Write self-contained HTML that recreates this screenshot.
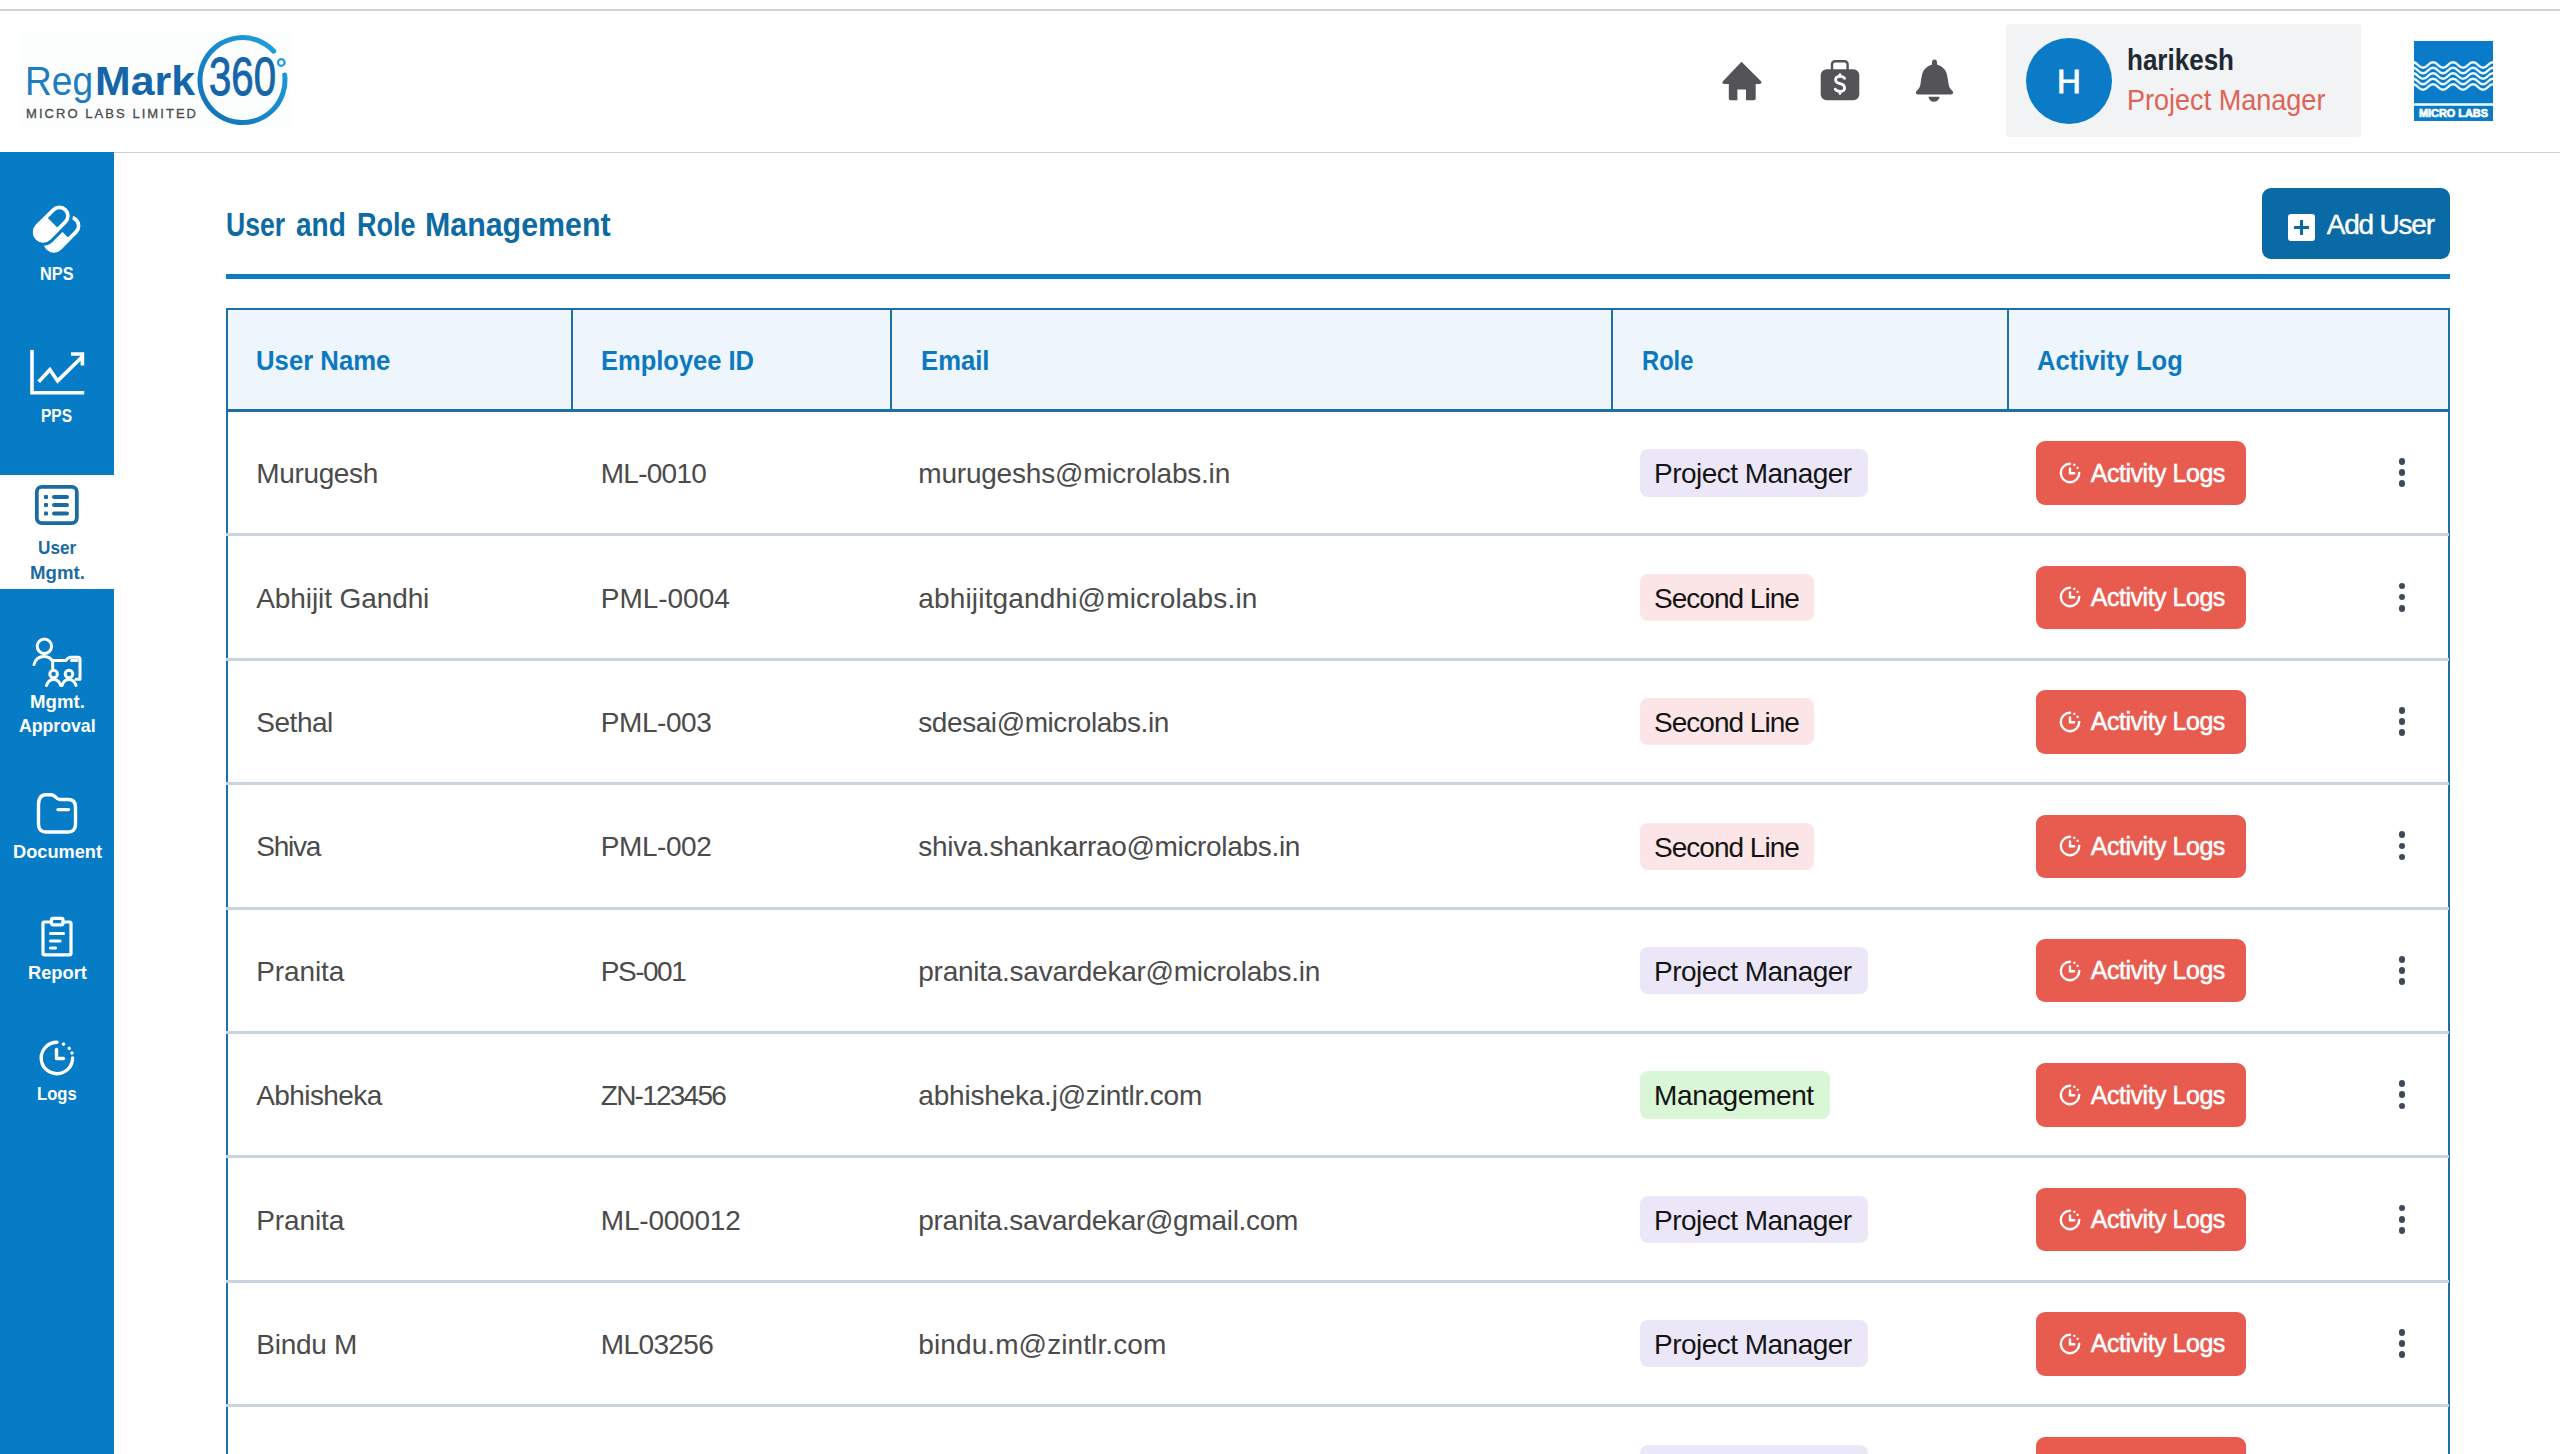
<!DOCTYPE html>
<html><head><meta charset="utf-8">
<style>
*{margin:0;padding:0;box-sizing:border-box}
html,body{width:2560px;height:1454px;overflow:hidden;background:#fff;font-family:"Liberation Sans",sans-serif}
.abs{position:absolute}
.t{white-space:nowrap}
#topline{left:0;top:9px;width:2560px;height:2px;background:#d2d2d2}
#hdrline{left:114px;top:152px;width:2446px;height:1px;background:#bfd5da}
#side{left:0;top:152px;width:114px;height:1302px;background:#067cc6}
.sl{position:absolute;left:0;width:114px;text-align:center;color:#fff;font-weight:bold;font-size:18px;line-height:24px}
#active{left:0;top:475px;width:114px;height:114px;background:#fff}
#title{left:226px;top:203px;font-size:32px;font-weight:bold;color:#0d6aa3;white-space:nowrap}
#tline{left:226px;top:274px;width:2224px;height:5px;background:#0e7cc2}
#addbtn{left:2262px;top:188px;width:188px;height:71px;background:#0a6aa6;border-radius:10px}
#thead{left:226px;top:307px;width:2224px;height:104px;background:#eef5fc;border:2px solid #1a7bc2;border-bottom-width:3px}
.th{position:absolute;top:0;height:100%;font-size:28px;font-weight:bold;color:#0c79bf;line-height:100px}
.vd{position:absolute;top:0;width:2px;height:100%;background:#1a7bc2}
.row{position:absolute;left:226px;width:2224px;height:125px;border-left:2px solid #1a7bc2;border-right:2px solid #1a7bc2}
.sep{position:absolute;left:226px;width:2224px;height:3px;background:#c9d2dc}
.td{position:absolute;top:0;line-height:125px;font-size:27px;color:#454545;white-space:nowrap}
.badge{position:absolute;left:1412px;top:38px;height:48px;border-radius:8px;font-size:27px;line-height:48px;color:#111;padding:0 14px}
.pm{background:#ebe7f8}.sl2{background:#fbe4e5}.mg{background:#dff5dc}
.alog{position:absolute;left:1808px;top:30px;width:210px;height:64px;border-radius:8px;background:#e85c50;color:#fff;font-size:26px;line-height:64px}
.kb{position:absolute;left:2169px;top:46px;width:10px;height:32px}
.kb i{position:absolute;left:1px;width:8px;height:8px;border-radius:50%;background:#3c4650}
</style></head><body>
<div id="hdr">
<div class="abs" style="left:21px;top:31px;width:270px;height:96px;background:#fcfdfd"></div>
<svg class="abs" style="left:0;top:0" width="300" height="140" viewBox="0 0 300 140">
<defs><linearGradient id="rg" x1="0" y1="1" x2="1" y2="0"><stop offset="0" stop-color="#0f6fb8"/><stop offset="1" stop-color="#22a3e0"/></linearGradient></defs>
<text x="25" y="95" font-family="Liberation Sans" font-size="40" fill="#1d7dc0" textLength="68" lengthAdjust="spacingAndGlyphs">Reg</text>
<text x="95" y="95" font-family="Liberation Sans" font-weight="bold" font-size="40" fill="#1466a8" textLength="100" lengthAdjust="spacingAndGlyphs">Mark</text>
<text x="26" y="117.5" font-family="Liberation Sans" font-size="13" fill="#4b4b4b" stroke="#4b4b4b" stroke-width="0.3" textLength="170" lengthAdjust="spacing">MICRO LABS LIMITED</text>
<path d="M 273.7 51.2 A 42.5 42.5 0 1 0 284.7 75" fill="none" stroke="url(#rg)" stroke-width="5" stroke-linecap="round"/>
<circle cx="281.3" cy="62.5" r="3.3" fill="none" stroke="#1e9ad8" stroke-width="2.2"/>
<text x="209" y="95" font-family="Liberation Sans" font-size="54" fill="#1466a8" stroke="#1466a8" stroke-width="1" textLength="67" lengthAdjust="spacingAndGlyphs">360</text>
</svg>
<svg class="abs" style="left:1715px;top:55px" width="250" height="52" viewBox="1715 55 250 52">
<path d="M1741.5 61.7 L1761.3 81.5 Q1762 84 1759 84 L1755.7 84 L1755.7 98.5 Q1755.7 100.3 1754 100.3 L1746 100.3 L1746 89.6 L1737.4 89.6 L1737.4 100.3 L1730.5 100.3 Q1728.8 100.3 1728.8 98.5 L1728.8 84 L1724.5 84 Q1721.5 84 1722.7 81.5 Z" fill="#545458"/>
<rect x="1820.7" y="69.3" width="38.6" height="31" rx="6" fill="#545458"/>
<rect x="1832" y="61.3" width="15.6" height="12" rx="3" fill="none" stroke="#545458" stroke-width="2.4"/>
<g fill="none" stroke="#fff" stroke-width="2.8" stroke-linecap="round"><path d="M1844.6 78.3 Q1843.2 76.4 1840 76.4 Q1835.6 76.4 1835.6 79.8 Q1835.6 82.6 1840 83.6 Q1844.6 84.6 1844.6 88 Q1844.6 91.4 1840 91.4 Q1836.6 91.4 1835.3 89.3"/><path d="M1840 74.6 L1840 76 M1840 91.8 L1840 93.4"/></g>
<path d="M1934.5 59.6 Q1937 59.6 1937 62.5 L1937 64.5 Q1947 67 1948 80 Q1948.5 88 1952 90.5 Q1953.8 92 1953 93.5 Q1952.5 94.4 1950 94.4 L1919 94.4 Q1916.5 94.4 1916 93.5 Q1915.3 92 1917 90.5 Q1920.5 88 1921 80 Q1922 67 1932 64.5 L1932 62.5 Q1932 59.6 1934.5 59.6 Z" fill="#545458"/>
<path d="M1928.4 96.8 L1939.6 96.8 Q1938.5 101.8 1934 101.8 Q1929.5 101.8 1928.4 96.8 Z" fill="#545458"/>
</svg>
<div class="abs" style="left:2006px;top:24px;width:355px;height:113px;background:#f2f3f5;border-radius:4px"></div>
<div class="abs" style="left:2026px;top:38px;width:86px;height:86px;border-radius:50%;background:#0b7bc8"></div><div class="abs" style="left:2026px;top:39.05px;width:86px;font-size:33px;line-height:86px;text-align:center;color:#fff;-webkit-text-stroke:0.9px #fff">H</div>
<div class="abs t" style="left:2127.00px;top:42.09px;font-size:30px;line-height:36px;font-weight:bold;color:#1f2933;transform:scaleX(0.8672);transform-origin:0 0">harikesh</div>
<div class="abs t" style="left:2126.60px;top:81.9px;font-size:29px;line-height:36px;color:#df6356;transform:scaleX(0.9324);transform-origin:0 0">Project Manager</div>
<svg class="abs" style="left:2414px;top:41px" width="79" height="80" viewBox="0 0 79 80">
<rect x="0" y="0" width="79" height="80" fill="#0a7bc8"/>
<g fill="none" stroke="#e8faff" stroke-width="2.6">
<path id="wv" d="M-6 24 q5 -5.5 10 0 t10 0 t10 0 t10 0 t10 0 t10 0 t10 0 t10 0 t10 0 t10 0"/>
<use href="#wv" y="5.5"/><use href="#wv" y="11"/><use href="#wv" y="16.5"/><use href="#wv" y="22"/>
</g>
<rect x="0" y="62.2" width="79" height="2.6" fill="#e8faff"/>
<text x="39.5" y="76" font-family="Liberation Sans" font-weight="bold" font-size="10.5" fill="#fff" stroke="#fff" stroke-width="0.7" text-anchor="middle" textLength="69" lengthAdjust="spacingAndGlyphs">MICRO LABS</text>
</svg>
</div>
<div id="topline" class="abs"></div>
<div id="hdrline" class="abs"></div>

<!--SIDE--><div id="side" class="abs"></div>
<div id="active" class="abs"></div>
<svg class="abs" style="left:0;top:152px" width="114" height="1000" viewBox="0 152 114 1000">
<g id="nps">
 <g transform="rotate(-45 62 234)">
  <rect x="42" y="225.5" width="40" height="17" rx="8.5" fill="none" stroke="#fff" stroke-width="3.6"/>
  <path d="M50.5 225.5 A8.5 8.5 0 0 0 50.5 242.5 L62 242.5 L62 225.5 Z" fill="#fff" stroke="#fff" stroke-width="3.6" stroke-linejoin="round"/>
 </g>
 <g transform="rotate(-45 51.3 224)">
  <rect x="31.3" y="215.5" width="40" height="17" rx="8.5" fill="#067cc6" stroke="#067cc6" stroke-width="10"/>
  <rect x="31.3" y="215.5" width="40" height="17" rx="8.5" fill="#067cc6" stroke="#fff" stroke-width="3.6"/>
  <path d="M39.8 215.5 A8.5 8.5 0 0 0 39.8 232.5 L51.3 232.5 L51.3 215.5 Z" fill="#fff" stroke="#fff" stroke-width="3.6" stroke-linejoin="round"/>
 </g>
</g>
<g fill="none" stroke="#fff" stroke-width="3.6" stroke-linecap="butt">
 <path d="M32 350 L32 392.8 L84.2 392.8"/>
 <path d="M38.7 381.7 L49.9 369.7 L57.6 380.9 L83 356" stroke-linejoin="miter"/>
 <path d="M71 354 L82.4 354 L82.4 365.4"/>
</g>
<g fill="none" stroke="#1b6ba0" stroke-width="3.8">
 <rect x="36.8" y="486.9" width="40" height="36.2" rx="5"/>
</g>
<g fill="#1b6ba0">
 <rect x="44" y="495" width="4" height="4" rx="1"/><rect x="52" y="495" width="17" height="4" rx="2"/>
 <rect x="44" y="503" width="4" height="4" rx="1"/><rect x="52" y="503" width="17" height="4" rx="2"/>
 <rect x="44" y="511.4" width="4" height="4" rx="1"/><rect x="52" y="511.4" width="17" height="4" rx="2"/>
</g>
<g fill="none" stroke="#fff" stroke-width="3" stroke-linecap="round" stroke-linejoin="round">
 <circle cx="44.4" cy="646.3" r="7.2"/>
 <path d="M34 664.5 Q36 656.5 44.3 656.5 Q50.5 656.5 52.7 662 L52.7 668"/>
 <path d="M52.7 660.5 L66 660.5 Q68 657.3 71 657.3 L78 657.3 Q80 657.3 80 659.5 L80 679.3 L76 679.3"/>
 <path d="M71.5 660.6 L77 660.6"/>
 <circle cx="53.6" cy="674" r="3.8"/>
 <circle cx="69" cy="674" r="3.8"/>
 <path d="M46.5 685.5 Q48.5 679.5 53.6 679.5 Q58.7 679.5 60.7 685.5"/>
 <path d="M62 685.5 Q64 679.5 69 679.5 Q74 679.5 76 685.5"/>
</g>
<g fill="none" stroke="#fff" stroke-width="3.4" stroke-linecap="round" stroke-linejoin="round">
 <path d="M38.5 805 Q38.5 794.8 46 794.8 L51 794.8 Q53.5 794.8 55.5 797 Q57.5 799.5 60 799.5 L68 799.5 Q75.5 799.5 75.5 807 L75.5 824 Q75.5 832 68 832 L46 832 Q38.5 832 38.5 824 Z"/>
 <path d="M58 809.6 L68.5 809.6"/>
</g>
<g fill="none" stroke="#fff" stroke-width="3.2" stroke-linecap="round" stroke-linejoin="round">
 <path d="M51 922 L44 922 Q43 922 43 923.5 L43 953.5 Q43 954.8 44.5 954.8 L69.5 954.8 Q71 954.8 71 953.5 L71 923.5 Q71 922 69.5 922 L63 922"/>
 <rect x="51.5" y="918.3" width="11.5" height="6.5" rx="1.5"/>
 <path d="M50.5 933.5 L63.5 933.5 M50.5 941 L60 941 M50.5 948 L55.5 948"/>
</g>
<g fill="none" stroke="#fff" stroke-width="3.4" stroke-linecap="round" stroke-linejoin="round">
 <path d="M57 1042.3 A15.7 15.7 0 1 0 72.6 1058"/>
 <path d="M56.5 1049.5 L56.5 1058.5 L63.5 1058.5"/>
 <path d="M63.5 1044 L63.6 1044.1 M69.2 1048.3 L69.3 1048.4 M72 1053 L72 1053.1"/>
</g>
</svg>
<div class="abs t" style="left:40.4px;top:262.21px;font-size:19px;line-height:24px;color:#fff;font-weight:bold;transform:scaleX(0.8576);transform-origin:0 0">NPS</div>
<div class="abs t" style="left:41.0px;top:404.41px;font-size:19px;line-height:24px;color:#fff;font-weight:bold;transform:scaleX(0.8154);transform-origin:0 0">PPS</div>
<div class="abs t" style="left:37.5px;top:536.31px;font-size:19px;line-height:24px;color:#1b6ba0;font-weight:bold;transform:scaleX(0.9040);transform-origin:0 0">User</div>
<div class="abs t" style="left:29.9px;top:561.01px;font-size:19px;line-height:24px;color:#1b6ba0;font-weight:bold;transform:scaleX(0.9797);transform-origin:0 0">Mgmt.</div>
<div class="abs t" style="left:29.9px;top:690.41px;font-size:19px;line-height:24px;color:#fff;font-weight:bold;transform:scaleX(0.9797);transform-origin:0 0">Mgmt.</div>
<div class="abs t" style="left:19.0px;top:714.41px;font-size:19px;line-height:24px;color:#fff;font-weight:bold;transform:scaleX(0.9302);transform-origin:0 0">Approval</div>
<div class="abs t" style="left:12.5px;top:839.91px;font-size:19px;line-height:24px;color:#fff;font-weight:bold;transform:scaleX(0.9581);transform-origin:0 0">Document</div>
<div class="abs t" style="left:27.7px;top:960.61px;font-size:19px;line-height:24px;color:#fff;font-weight:bold;transform:scaleX(0.9621);transform-origin:0 0">Report</div>
<div class="abs t" style="left:37.3px;top:1082.11px;font-size:19px;line-height:24px;color:#fff;font-weight:bold;transform:scaleX(0.8746);transform-origin:0 0">Logs</div><!--/SIDE-->

<!--MAIN--><div class="abs t" style="left:225.5px;top:203.95px;font-size:33px;line-height:41px;color:#0d6aa3;font-weight:bold;transform:scaleX(0.8053);transform-origin:0 0">User</div>
<div class="abs t" style="left:295.8px;top:203.95px;font-size:33px;line-height:41px;color:#0d6aa3;font-weight:bold;transform:scaleX(0.8488);transform-origin:0 0">and</div>
<div class="abs t" style="left:356.8px;top:203.95px;font-size:33px;line-height:41px;color:#0d6aa3;font-weight:bold;transform:scaleX(0.8181);transform-origin:0 0">Role</div>
<div class="abs t" style="left:424.7px;top:203.95px;font-size:33px;line-height:41px;color:#0d6aa3;font-weight:bold;transform:scaleX(0.9202);transform-origin:0 0">Management</div>
<div class="abs" style="left:226px;top:274px;width:2224px;height:5px;background:#0e7cc2"></div>
<div class="abs" style="left:2262px;top:188px;width:188px;height:71px;background:#0a6aa6;border-radius:9px"></div>
<div class="abs" style="left:2288px;top:214px;width:27px;height:27px;background:#fff;border-radius:3px"></div>
<div class="abs" style="left:2294.3px;top:225.8px;width:14.4px;height:3.3px;background:#0a6aa6"></div>
<div class="abs" style="left:2299.8px;top:220.2px;width:3.3px;height:14.4px;background:#0a6aa6"></div>
<div class="abs t" style="left:2326.7px;top:207.38px;font-size:28px;line-height:35px;letter-spacing:-1.2px;color:#fff;font-weight:normal;-webkit-text-stroke:0.4px #fff">Add User</div>
<div class="abs" style="left:226px;top:307.5px;width:2224px;height:104.2px;background:#eef5fc;border:2px solid #1e6fa6;border-bottom-width:3px;box-sizing:border-box"></div>
<div class="abs" style="left:570.5px;top:308px;width:2px;height:102px;background:#1e6fa6"></div>
<div class="abs" style="left:889.9px;top:308px;width:2px;height:102px;background:#1e6fa6"></div>
<div class="abs" style="left:1610.5px;top:308px;width:2px;height:102px;background:#1e6fa6"></div>
<div class="abs" style="left:2006.9px;top:308px;width:2px;height:102px;background:#1e6fa6"></div>
<div class="abs t" style="left:256.0px;top:341.81px;font-size:28.5px;line-height:36px;color:#0c79bf;font-weight:bold;transform:scaleX(0.9025);transform-origin:0 0">User Name</div>
<div class="abs t" style="left:601.0px;top:341.81px;font-size:28.5px;line-height:36px;color:#0c79bf;font-weight:bold;transform:scaleX(0.8944);transform-origin:0 0">Employee ID</div>
<div class="abs t" style="left:920.7px;top:341.81px;font-size:28.5px;line-height:36px;color:#0c79bf;font-weight:bold;transform:scaleX(0.9009);transform-origin:0 0">Email</div>
<div class="abs t" style="left:1641.8px;top:341.81px;font-size:28.5px;line-height:36px;color:#0c79bf;font-weight:bold;transform:scaleX(0.8323);transform-origin:0 0">Role</div>
<div class="abs t" style="left:2036.8px;top:341.81px;font-size:28.5px;line-height:36px;color:#0c79bf;font-weight:bold;transform:scaleX(0.8933);transform-origin:0 0">Activity Log</div>
<div class="abs" style="left:226px;top:411px;width:2px;height:1043px;background:#1e6fa6"></div>
<div class="abs" style="left:2448px;top:411px;width:2px;height:1043px;background:#1e6fa6"></div>
<div class="abs t" style="left:256.3px;top:456.18px;font-size:28px;line-height:35px;letter-spacing:-0.36px;color:#4b4b4b;font-weight:normal">Murugesh</div>
<div class="abs t" style="left:600.8px;top:456.18px;font-size:28px;line-height:35px;letter-spacing:-0.75px;color:#4b4b4b;font-weight:normal">ML-0010</div>
<div class="abs t" style="left:918.3px;top:456.18px;font-size:28px;line-height:35px;letter-spacing:-0.21px;color:#4b4b4b;font-weight:normal">murugeshs@microlabs.in</div>
<div class="abs" style="left:1640.3px;top:449.3px;width:227.3px;height:47.3px;background:#ebe7f9;border-radius:8px"></div>
<div class="abs t" style="left:1654.1px;top:456.38px;font-size:28px;line-height:35px;letter-spacing:-0.53px;color:#141414;font-weight:normal">Project Manager</div>
<div class="abs" style="left:2036.4px;top:441.2px;width:209.7px;height:63.5px;background:#e85c50;border-radius:9px"></div>
<svg class="abs" style="left:2056px;top:459.0px" width="28" height="28" viewBox="-14 -14 28 28"><g fill="none" stroke="#fff" stroke-width="2.4" stroke-linecap="round"><path d="M0 -9.2 A9.2 9.2 0 1 0 9.2 0"/><path d="M0 -4.5 L0 0.3 L4.2 0.3"/><path d="M4.3 -8.2 L4.35 -8.15 M7.6 -5.2 L7.65 -5.15"/></g></svg>
<div class="abs t" style="left:2090.8px;top:457.52px;font-size:25px;line-height:31px;letter-spacing:-0.48px;color:#fff;font-weight:normal;-webkit-text-stroke:0.5px #fff">Activity Logs</div>
<div class="abs" style="left:2398.6px;top:458.1px;width:6.8px;height:6.8px;border-radius:50%;background:#3f4a58"></div>
<div class="abs" style="left:2398.6px;top:469.3px;width:6.8px;height:6.8px;border-radius:50%;background:#3f4a58"></div>
<div class="abs" style="left:2398.6px;top:480.4px;width:6.8px;height:6.8px;border-radius:50%;background:#3f4a58"></div>
<div class="abs t" style="left:256.3px;top:580.6px;font-size:28px;line-height:35px;letter-spacing:-0.1px;color:#4b4b4b;font-weight:normal">Abhijit Gandhi</div>
<div class="abs t" style="left:600.8px;top:580.6px;font-size:28px;line-height:35px;letter-spacing:-0.03px;color:#4b4b4b;font-weight:normal">PML-0004</div>
<div class="abs t" style="left:918.3px;top:580.6px;font-size:28px;line-height:35px;letter-spacing:0.16px;color:#4b4b4b;font-weight:normal">abhijitgandhi@microlabs.in</div>
<div class="abs" style="left:1640.3px;top:573.7px;width:173.7px;height:47.3px;background:#fbe5e6;border-radius:8px"></div>
<div class="abs t" style="left:1654.1px;top:580.8px;font-size:28px;line-height:35px;letter-spacing:-1.0px;color:#141414;font-weight:normal">Second Line</div>
<div class="abs" style="left:2036.4px;top:565.6px;width:209.7px;height:63.5px;background:#e85c50;border-radius:9px"></div>
<svg class="abs" style="left:2056px;top:583.4px" width="28" height="28" viewBox="-14 -14 28 28"><g fill="none" stroke="#fff" stroke-width="2.4" stroke-linecap="round"><path d="M0 -9.2 A9.2 9.2 0 1 0 9.2 0"/><path d="M0 -4.5 L0 0.3 L4.2 0.3"/><path d="M4.3 -8.2 L4.35 -8.15 M7.6 -5.2 L7.65 -5.15"/></g></svg>
<div class="abs t" style="left:2090.8px;top:581.95px;font-size:25px;line-height:31px;letter-spacing:-0.48px;color:#fff;font-weight:normal;-webkit-text-stroke:0.5px #fff">Activity Logs</div>
<div class="abs" style="left:2398.6px;top:582.5px;width:6.8px;height:6.8px;border-radius:50%;background:#3f4a58"></div>
<div class="abs" style="left:2398.6px;top:593.7px;width:6.8px;height:6.8px;border-radius:50%;background:#3f4a58"></div>
<div class="abs" style="left:2398.6px;top:604.8px;width:6.8px;height:6.8px;border-radius:50%;background:#3f4a58"></div>
<div class="abs t" style="left:256.3px;top:705.02px;font-size:28px;line-height:35px;letter-spacing:-0.48px;color:#4b4b4b;font-weight:normal">Sethal</div>
<div class="abs t" style="left:600.8px;top:705.02px;font-size:28px;line-height:35px;letter-spacing:-0.44px;color:#4b4b4b;font-weight:normal">PML-003</div>
<div class="abs t" style="left:918.3px;top:705.02px;font-size:28px;line-height:35px;letter-spacing:-0.43px;color:#4b4b4b;font-weight:normal">sdesai@microlabs.in</div>
<div class="abs" style="left:1640.3px;top:698.1px;width:173.7px;height:47.3px;background:#fbe5e6;border-radius:8px"></div>
<div class="abs t" style="left:1654.1px;top:705.22px;font-size:28px;line-height:35px;letter-spacing:-1.0px;color:#141414;font-weight:normal">Second Line</div>
<div class="abs" style="left:2036.4px;top:690.0px;width:209.7px;height:63.5px;background:#e85c50;border-radius:9px"></div>
<svg class="abs" style="left:2056px;top:707.8px" width="28" height="28" viewBox="-14 -14 28 28"><g fill="none" stroke="#fff" stroke-width="2.4" stroke-linecap="round"><path d="M0 -9.2 A9.2 9.2 0 1 0 9.2 0"/><path d="M0 -4.5 L0 0.3 L4.2 0.3"/><path d="M4.3 -8.2 L4.35 -8.15 M7.6 -5.2 L7.65 -5.15"/></g></svg>
<div class="abs t" style="left:2090.8px;top:706.37px;font-size:25px;line-height:31px;letter-spacing:-0.48px;color:#fff;font-weight:normal;-webkit-text-stroke:0.5px #fff">Activity Logs</div>
<div class="abs" style="left:2398.6px;top:706.9px;width:6.8px;height:6.8px;border-radius:50%;background:#3f4a58"></div>
<div class="abs" style="left:2398.6px;top:718.1px;width:6.8px;height:6.8px;border-radius:50%;background:#3f4a58"></div>
<div class="abs" style="left:2398.6px;top:729.2px;width:6.8px;height:6.8px;border-radius:50%;background:#3f4a58"></div>
<div class="abs t" style="left:256.3px;top:829.44px;font-size:28px;line-height:35px;letter-spacing:-1.26px;color:#4b4b4b;font-weight:normal">Shiva</div>
<div class="abs t" style="left:600.8px;top:829.44px;font-size:28px;line-height:35px;letter-spacing:-0.44px;color:#4b4b4b;font-weight:normal">PML-002</div>
<div class="abs t" style="left:918.3px;top:829.44px;font-size:28px;line-height:35px;letter-spacing:-0.32px;color:#4b4b4b;font-weight:normal">shiva.shankarrao@microlabs.in</div>
<div class="abs" style="left:1640.3px;top:822.6px;width:173.7px;height:47.3px;background:#fbe5e6;border-radius:8px"></div>
<div class="abs t" style="left:1654.1px;top:829.64px;font-size:28px;line-height:35px;letter-spacing:-1.0px;color:#141414;font-weight:normal">Second Line</div>
<div class="abs" style="left:2036.4px;top:814.5px;width:209.7px;height:63.5px;background:#e85c50;border-radius:9px"></div>
<svg class="abs" style="left:2056px;top:832.3px" width="28" height="28" viewBox="-14 -14 28 28"><g fill="none" stroke="#fff" stroke-width="2.4" stroke-linecap="round"><path d="M0 -9.2 A9.2 9.2 0 1 0 9.2 0"/><path d="M0 -4.5 L0 0.3 L4.2 0.3"/><path d="M4.3 -8.2 L4.35 -8.15 M7.6 -5.2 L7.65 -5.15"/></g></svg>
<div class="abs t" style="left:2090.8px;top:830.79px;font-size:25px;line-height:31px;letter-spacing:-0.48px;color:#fff;font-weight:normal;-webkit-text-stroke:0.5px #fff">Activity Logs</div>
<div class="abs" style="left:2398.6px;top:831.4px;width:6.8px;height:6.8px;border-radius:50%;background:#3f4a58"></div>
<div class="abs" style="left:2398.6px;top:842.6px;width:6.8px;height:6.8px;border-radius:50%;background:#3f4a58"></div>
<div class="abs" style="left:2398.6px;top:853.7px;width:6.8px;height:6.8px;border-radius:50%;background:#3f4a58"></div>
<div class="abs t" style="left:256.3px;top:953.86px;font-size:28px;line-height:35px;letter-spacing:-0.12px;color:#4b4b4b;font-weight:normal">Pranita</div>
<div class="abs t" style="left:600.8px;top:953.86px;font-size:28px;line-height:35px;letter-spacing:-1.48px;color:#4b4b4b;font-weight:normal">PS-001</div>
<div class="abs t" style="left:918.3px;top:953.86px;font-size:28px;line-height:35px;letter-spacing:-0.26px;color:#4b4b4b;font-weight:normal">pranita.savardekar@microlabs.in</div>
<div class="abs" style="left:1640.3px;top:947.0px;width:227.3px;height:47.3px;background:#ebe7f9;border-radius:8px"></div>
<div class="abs t" style="left:1654.1px;top:954.06px;font-size:28px;line-height:35px;letter-spacing:-0.53px;color:#141414;font-weight:normal">Project Manager</div>
<div class="abs" style="left:2036.4px;top:938.9px;width:209.7px;height:63.5px;background:#e85c50;border-radius:9px"></div>
<svg class="abs" style="left:2056px;top:956.7px" width="28" height="28" viewBox="-14 -14 28 28"><g fill="none" stroke="#fff" stroke-width="2.4" stroke-linecap="round"><path d="M0 -9.2 A9.2 9.2 0 1 0 9.2 0"/><path d="M0 -4.5 L0 0.3 L4.2 0.3"/><path d="M4.3 -8.2 L4.35 -8.15 M7.6 -5.2 L7.65 -5.15"/></g></svg>
<div class="abs t" style="left:2090.8px;top:955.21px;font-size:25px;line-height:31px;letter-spacing:-0.48px;color:#fff;font-weight:normal;-webkit-text-stroke:0.5px #fff">Activity Logs</div>
<div class="abs" style="left:2398.6px;top:955.8px;width:6.8px;height:6.8px;border-radius:50%;background:#3f4a58"></div>
<div class="abs" style="left:2398.6px;top:967.0px;width:6.8px;height:6.8px;border-radius:50%;background:#3f4a58"></div>
<div class="abs" style="left:2398.6px;top:978.1px;width:6.8px;height:6.8px;border-radius:50%;background:#3f4a58"></div>
<div class="abs t" style="left:256.3px;top:1078.28px;font-size:28px;line-height:35px;letter-spacing:-0.6px;color:#4b4b4b;font-weight:normal">Abhisheka</div>
<div class="abs t" style="left:600.8px;top:1078.28px;font-size:28px;line-height:35px;letter-spacing:-1.76px;color:#4b4b4b;font-weight:normal">ZN-123456</div>
<div class="abs t" style="left:918.3px;top:1078.28px;font-size:28px;line-height:35px;letter-spacing:-0.21px;color:#4b4b4b;font-weight:normal">abhisheka.j@zintlr.com</div>
<div class="abs" style="left:1640.3px;top:1071.4px;width:190px;height:47.3px;background:#d9f6d6;border-radius:8px"></div>
<div class="abs t" style="left:1654.1px;top:1078.48px;font-size:28px;line-height:35px;letter-spacing:-0.38px;color:#141414;font-weight:normal">Management</div>
<div class="abs" style="left:2036.4px;top:1063.3px;width:209.7px;height:63.5px;background:#e85c50;border-radius:9px"></div>
<svg class="abs" style="left:2056px;top:1081.1px" width="28" height="28" viewBox="-14 -14 28 28"><g fill="none" stroke="#fff" stroke-width="2.4" stroke-linecap="round"><path d="M0 -9.2 A9.2 9.2 0 1 0 9.2 0"/><path d="M0 -4.5 L0 0.3 L4.2 0.3"/><path d="M4.3 -8.2 L4.35 -8.15 M7.6 -5.2 L7.65 -5.15"/></g></svg>
<div class="abs t" style="left:2090.8px;top:1079.62px;font-size:25px;line-height:31px;letter-spacing:-0.48px;color:#fff;font-weight:normal;-webkit-text-stroke:0.5px #fff">Activity Logs</div>
<div class="abs" style="left:2398.6px;top:1080.2px;width:6.8px;height:6.8px;border-radius:50%;background:#3f4a58"></div>
<div class="abs" style="left:2398.6px;top:1091.4px;width:6.8px;height:6.8px;border-radius:50%;background:#3f4a58"></div>
<div class="abs" style="left:2398.6px;top:1102.5px;width:6.8px;height:6.8px;border-radius:50%;background:#3f4a58"></div>
<div class="abs t" style="left:256.3px;top:1202.7px;font-size:28px;line-height:35px;letter-spacing:-0.12px;color:#4b4b4b;font-weight:normal">Pranita</div>
<div class="abs t" style="left:600.8px;top:1202.7px;font-size:28px;line-height:35px;letter-spacing:-0.21px;color:#4b4b4b;font-weight:normal">ML-000012</div>
<div class="abs t" style="left:918.3px;top:1202.7px;font-size:28px;line-height:35px;letter-spacing:-0.29px;color:#4b4b4b;font-weight:normal">pranita.savardekar@gmail.com</div>
<div class="abs" style="left:1640.3px;top:1195.8px;width:227.3px;height:47.3px;background:#ebe7f9;border-radius:8px"></div>
<div class="abs t" style="left:1654.1px;top:1202.9px;font-size:28px;line-height:35px;letter-spacing:-0.53px;color:#141414;font-weight:normal">Project Manager</div>
<div class="abs" style="left:2036.4px;top:1187.7px;width:209.7px;height:63.5px;background:#e85c50;border-radius:9px"></div>
<svg class="abs" style="left:2056px;top:1205.5px" width="28" height="28" viewBox="-14 -14 28 28"><g fill="none" stroke="#fff" stroke-width="2.4" stroke-linecap="round"><path d="M0 -9.2 A9.2 9.2 0 1 0 9.2 0"/><path d="M0 -4.5 L0 0.3 L4.2 0.3"/><path d="M4.3 -8.2 L4.35 -8.15 M7.6 -5.2 L7.65 -5.15"/></g></svg>
<div class="abs t" style="left:2090.8px;top:1204.05px;font-size:25px;line-height:31px;letter-spacing:-0.48px;color:#fff;font-weight:normal;-webkit-text-stroke:0.5px #fff">Activity Logs</div>
<div class="abs" style="left:2398.6px;top:1204.6px;width:6.8px;height:6.8px;border-radius:50%;background:#3f4a58"></div>
<div class="abs" style="left:2398.6px;top:1215.8px;width:6.8px;height:6.8px;border-radius:50%;background:#3f4a58"></div>
<div class="abs" style="left:2398.6px;top:1226.9px;width:6.8px;height:6.8px;border-radius:50%;background:#3f4a58"></div>
<div class="abs t" style="left:256.3px;top:1327.12px;font-size:28px;line-height:35px;letter-spacing:-0.28px;color:#4b4b4b;font-weight:normal">Bindu M</div>
<div class="abs t" style="left:600.8px;top:1327.12px;font-size:28px;line-height:35px;letter-spacing:-0.63px;color:#4b4b4b;font-weight:normal">ML03256</div>
<div class="abs t" style="left:918.3px;top:1327.12px;font-size:28px;line-height:35px;letter-spacing:0.1px;color:#4b4b4b;font-weight:normal">bindu.m@zintlr.com</div>
<div class="abs" style="left:1640.3px;top:1320.2px;width:227.3px;height:47.3px;background:#ebe7f9;border-radius:8px"></div>
<div class="abs t" style="left:1654.1px;top:1327.32px;font-size:28px;line-height:35px;letter-spacing:-0.53px;color:#141414;font-weight:normal">Project Manager</div>
<div class="abs" style="left:2036.4px;top:1312.1px;width:209.7px;height:63.5px;background:#e85c50;border-radius:9px"></div>
<svg class="abs" style="left:2056px;top:1329.9px" width="28" height="28" viewBox="-14 -14 28 28"><g fill="none" stroke="#fff" stroke-width="2.4" stroke-linecap="round"><path d="M0 -9.2 A9.2 9.2 0 1 0 9.2 0"/><path d="M0 -4.5 L0 0.3 L4.2 0.3"/><path d="M4.3 -8.2 L4.35 -8.15 M7.6 -5.2 L7.65 -5.15"/></g></svg>
<div class="abs t" style="left:2090.8px;top:1328.47px;font-size:25px;line-height:31px;letter-spacing:-0.48px;color:#fff;font-weight:normal;-webkit-text-stroke:0.5px #fff">Activity Logs</div>
<div class="abs" style="left:2398.6px;top:1329.0px;width:6.8px;height:6.8px;border-radius:50%;background:#3f4a58"></div>
<div class="abs" style="left:2398.6px;top:1340.2px;width:6.8px;height:6.8px;border-radius:50%;background:#3f4a58"></div>
<div class="abs" style="left:2398.6px;top:1351.3px;width:6.8px;height:6.8px;border-radius:50%;background:#3f4a58"></div>
<div class="abs" style="left:1640.3px;top:1444.7px;width:227.3px;height:47.3px;background:#ebe7f9;border-radius:8px"></div>
<div class="abs t" style="left:1654.1px;top:1451.74px;font-size:28px;line-height:35px;letter-spacing:-0.53px;color:#141414;font-weight:normal">Project Manager</div>
<div class="abs" style="left:2036.4px;top:1436.6px;width:209.7px;height:63.5px;background:#e85c50;border-radius:9px"></div>
<svg class="abs" style="left:2056px;top:1454.4px" width="28" height="28" viewBox="-14 -14 28 28"><g fill="none" stroke="#fff" stroke-width="2.4" stroke-linecap="round"><path d="M0 -9.2 A9.2 9.2 0 1 0 9.2 0"/><path d="M0 -4.5 L0 0.3 L4.2 0.3"/><path d="M4.3 -8.2 L4.35 -8.15 M7.6 -5.2 L7.65 -5.15"/></g></svg>
<div class="abs t" style="left:2090.8px;top:1452.88px;font-size:25px;line-height:31px;letter-spacing:-0.48px;color:#fff;font-weight:normal;-webkit-text-stroke:0.5px #fff">Activity Logs</div>
<div class="abs" style="left:2398.6px;top:1453.5px;width:6.8px;height:6.8px;border-radius:50%;background:#3f4a58"></div>
<div class="abs" style="left:2398.6px;top:1464.7px;width:6.8px;height:6.8px;border-radius:50%;background:#3f4a58"></div>
<div class="abs" style="left:2398.6px;top:1475.8px;width:6.8px;height:6.8px;border-radius:50%;background:#3f4a58"></div>
<div class="abs" style="left:226px;top:533.3px;width:2223px;height:3px;background:#cbd4de"></div>
<div class="abs" style="left:226px;top:657.7px;width:2223px;height:3px;background:#cbd4de"></div>
<div class="abs" style="left:226px;top:782.1px;width:2223px;height:3px;background:#cbd4de"></div>
<div class="abs" style="left:226px;top:906.6px;width:2223px;height:3px;background:#cbd4de"></div>
<div class="abs" style="left:226px;top:1031.0px;width:2223px;height:3px;background:#cbd4de"></div>
<div class="abs" style="left:226px;top:1155.4px;width:2223px;height:3px;background:#cbd4de"></div>
<div class="abs" style="left:226px;top:1279.8px;width:2223px;height:3px;background:#cbd4de"></div>
<div class="abs" style="left:226px;top:1404.2px;width:2223px;height:3px;background:#cbd4de"></div><!--/MAIN-->
</body></html>
